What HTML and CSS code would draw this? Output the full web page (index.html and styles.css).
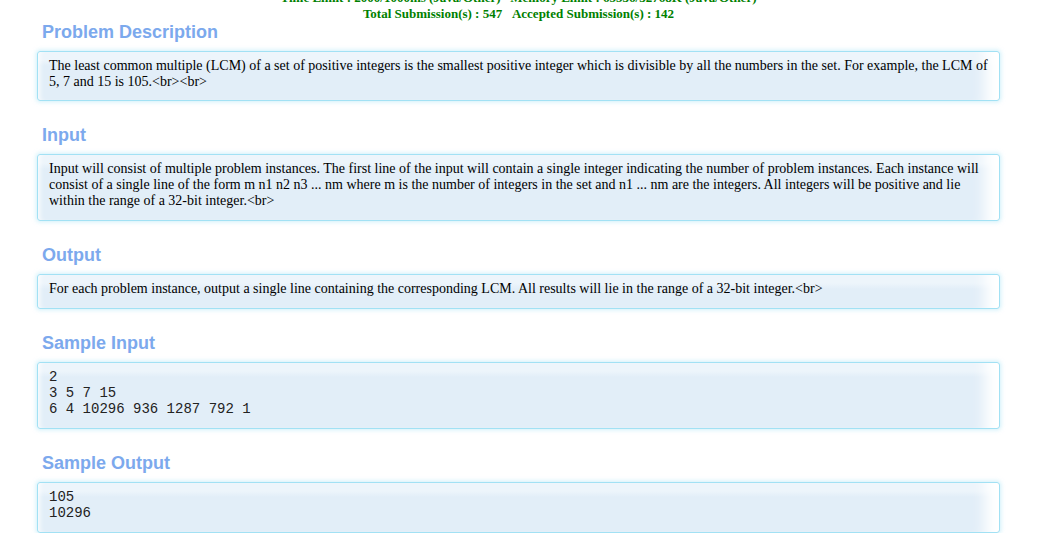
FILE: index.html
```html
<!DOCTYPE html>
<html lang="en">
<head>
<meta charset="utf-8">
<title>Problem</title>
<link rel="stylesheet" href="styles.css">
</head>
<body>
<main class="page">
  <div class="limits">
    <div>Time Limit : 2000/1000ms (Java/Other)&nbsp;&nbsp;&nbsp;Memory Limit : 65536/32768K (Java/Other)</div>
    <div>Total Submission(s) : 547&nbsp;&nbsp;&nbsp;Accepted Submission(s) : 142</div>
  </div>

  <section class="panel">
    <h2 class="panel-title">Problem Description</h2>
    <div class="panel-content">The least common multiple (LCM) of a set of positive integers is the smallest positive integer which is divisible by all the numbers in the set. For example, the LCM of 5, 7 and 15 is 105.&lt;br&gt;&lt;br&gt;</div>
  </section>

  <section class="panel">
    <h2 class="panel-title">Input</h2>
    <div class="panel-content">Input will consist of multiple problem instances. The first line of the input will contain a single integer indicating the number of problem instances. Each instance will consist of a single line of the form m n1 n2 n3 ... nm where m is the number of integers in the set and n1 ... nm are the integers. All integers will be positive and lie within the range of a 32-bit integer.&lt;br&gt;</div>
  </section>

  <section class="panel">
    <h2 class="panel-title">Output</h2>
    <div class="panel-content">For each problem instance, output a single line containing the corresponding LCM. All results will lie in the range of a 32-bit integer.&lt;br&gt;</div>
  </section>

  <section class="panel">
    <h2 class="panel-title">Sample Input</h2>
    <div class="panel-content"><pre class="sample">2
3 5 7 15
6 4 10296 936 1287 792 1</pre></div>
  </section>

  <section class="panel">
    <h2 class="panel-title">Sample Output</h2>
    <div class="panel-content"><pre class="sample">105
10296</pre></div>
  </section>
</main>
</body>
</html>
```

FILE: styles.css
```css
html, body {
  margin: 0;
  padding: 0;
  background: #ffffff;
}

body {
  font-family: "Liberation Serif", "Times New Roman", serif;
}

.page {
  margin-left: 37px;
  width: 963px;
}

.limits {
  margin-top: -10px;
  text-align: center;
  font-size: 13px;
  line-height: 16px;
  font-weight: bold;
  color: #008000;
}

.panel {
  margin-top: 24px;
}

.panel:first-of-type {
  margin-top: 0;
}

.panel-title {
  margin: 0 0 9px 0;
  padding-left: 5px;
  font-family: "Liberation Sans", Arial, sans-serif;
  font-size: 18px;
  line-height: 20px;
  font-weight: bold;
  color: #7ca9ed;
}

.panel-content {
  border: 1px solid #a2e1f4;
  border-radius: 3px;
  padding: 6px 8px 11px 11px;
  font-size: 14px;
  line-height: 16px;
  color: #000;
  background: linear-gradient(#edf5fb 0, #edf5fb 8px, #e2eef8 14px, #e2eef8 100%);
  box-shadow:
    0 0 4px 1px rgba(170, 228, 246, 0.55),
    inset -26px 0 14px -12px #ffffff,
    inset 5px 0 5px -3px rgba(255, 255, 255, 0.8);
}

.panel:first-of-type .panel-content {
  padding-bottom: 10px;
}

.sample {
  margin: 0;
  font-family: "Liberation Mono", "Courier New", monospace;
  font-size: 14px;
  line-height: 16px;
  color: #222;
}
```
